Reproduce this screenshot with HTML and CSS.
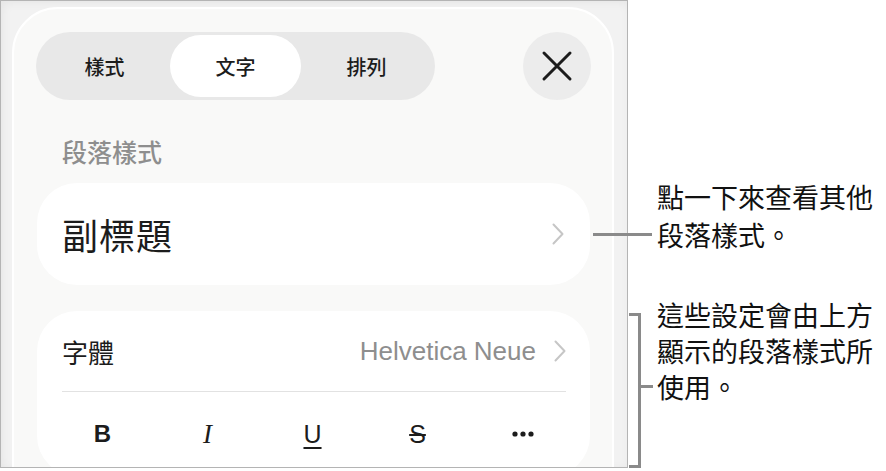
FILE: index.html
```html
<!DOCTYPE html>
<html>
    <head>
        <meta charset="utf-8">
        <title>文字格式</title>
        <link rel="stylesheet" href="styles.css">
    </head>
    <body>
        <div class="page">
            <div class="shot">
                <div class="panel">
                    <div class="toolbar">
                        <div class="tabs">
                            <div class="tab">樣式</div>
                            <div class="tab active">文字</div>
                            <div class="tab">排列</div>
                        </div>
                        <div class="close">
                            <svg width="68" height="68" viewBox="0 0 68 68">
                                <path d="M21 21 L47 47 M47 21 L21 47" stroke="#1c1c1c" stroke-width="3" stroke-linecap="round" fill="none"/>
                            </svg>
                        </div>
                    </div>

                    <div class="section-label">段落樣式</div>

                    <div class="card style-card">
                        <span class="style-name">副標題</span>
                        <svg class="chevron" width="12" height="22" viewBox="0 0 12 22">
                            <path d="M1.5 1.5 L10.5 11 L1.5 20.5" stroke="#c6c6c6" stroke-width="2" fill="none" stroke-linecap="round" stroke-linejoin="round"/>
                        </svg>
                    </div>

                    <div class="card font-card">
                        <div class="font-row">
                            <span class="font-label">字體</span>
                            <span class="font-value">Helvetica Neue</span>
                            <svg class="chevron" width="12" height="22" viewBox="0 0 12 22">
                                <path d="M1.5 1.5 L10.5 11 L1.5 20.5" stroke="#c6c6c6" stroke-width="2" fill="none" stroke-linecap="round" stroke-linejoin="round"/>
                            </svg>
                        </div>
                        <div class="format-row">
                            <span class="fmt fmt-bold">B</span>
                            <span class="fmt fmt-italic">I</span>
                            <span class="fmt fmt-under">U</span>
                            <span class="fmt fmt-strike">S</span>
                            <span class="fmt">
                                <svg width="22" height="6" viewBox="0 0 22 6">
                                    <circle cx="3" cy="3" r="2.6" fill="#1c1c1c"/>
                                    <circle cx="11" cy="3" r="2.6" fill="#1c1c1c"/>
                                    <circle cx="19" cy="3" r="2.6" fill="#1c1c1c"/>
                                </svg>
                            </span>
                        </div>
                    </div>
                </div>
            </div>

            <!-- callouts -->
            <div class="lead lead-style"></div>
            <div class="note note-style">點一下來查看其他<br>段落樣式。</div>

            <div class="bracket"></div>
            <div class="lead lead-bracket"></div>
            <div class="note note-settings">這些設定會由上方<br>顯示的段落樣式所<br>使用。</div>
        </div>
    </body>
</html>
```
FILE: styles.css
```css
body {
    margin: 0;
    background: #fff;
    font-family: "Noto Sans CJK TC", "Liberation Sans", sans-serif;
    color: #1c1c1c;
}

.page {
    position: relative;
    width: 886px;
    height: 471px;
    overflow: hidden;
}

/* device screenshot frame */
.shot {
    width: 626px;
    height: 466px;
    border: 1px solid #b4b4b4;
    background: #f2f2f2;
    box-shadow: inset 2px 2px 10px rgba(0, 0, 0, 0.05);
    overflow: hidden;
}

.panel {
    margin: 6px 0 0 11px;
    width: 602px;
    height: 600px;
    border: 2px solid #fff;
    border-radius: 46px;
    background: #f9f9f8;
    padding: 23px 21px 0 22px;
    box-sizing: border-box;
}

.toolbar {
    display: flex;
    justify-content: space-between;
    align-items: center;
}

.tabs {
    display: grid;
    grid-template-columns: 131px 131px 131px;
    padding: 3px;
    width: 399px;
    height: 68px;
    box-sizing: border-box;
    border-radius: 34px;
    background: #e8e8e8;
}

.tab {
    display: flex;
    align-items: center;
    justify-content: center;
    border-radius: 31px;
    font-size: 20px;
    font-weight: 500;
    color: #1c1c1c;
}

.tab.active {
    background: #fff;
}

.close {
    width: 68px;
    height: 68px;
    border-radius: 50%;
    background: #ececec;
}

.close svg {
    display: block;
}

.section-label {
    margin: 36px 0 0 26px;
    font-size: 25px;
    line-height: 30px;
    font-weight: 500;
    color: #8e8e8e;
}

.card {
    background: #fff;
    border-radius: 40px;
    margin-left: 1px;
    margin-right: 1px;
}

.style-card {
    margin-top: 17px;
    height: 102px;
    display: flex;
    align-items: center;
    justify-content: space-between;
    padding: 0 26px 0 25px;
}

.style-name {
    font-size: 36px;
    font-weight: 400;
    letter-spacing: 1px;
}

.chevron {
    display: block;
    flex: none;
}

.font-card {
    margin-top: 26px;
    padding: 0 24px 0 25px;
}

.font-row {
    display: flex;
    align-items: center;
    height: 80px;
    border-bottom: 1.5px solid #e2e2e2;
}

.font-label {
    font-size: 26px;
    flex: 1;
}

.font-value {
    font-family: "Liberation Sans", sans-serif;
    font-size: 26px;
    color: #8e8e8e;
    margin-right: 18px;
}

.format-row {
    display: grid;
    grid-template-columns: repeat(5, 105px);
    margin: 0 -12px;
    height: 84px;
    align-items: center;
    justify-items: center;
}

.fmt {
    font-family: "Liberation Sans", sans-serif;
    font-size: 25px;
    color: #1c1c1c;
    line-height: 1;
}

.fmt svg {
    display: block;
}

.fmt-bold {
    font-weight: 700;
    font-size: 24px;
}

.fmt-italic {
    font-family: "Liberation Serif", serif;
    font-style: italic;
    font-size: 27px;
}

.fmt-under {
    text-decoration: underline;
    text-decoration-thickness: 2px;
    text-underline-offset: 4px;
}

.fmt-strike {
    text-decoration: line-through;
    text-decoration-thickness: 2px;
}

/* callout text and leader lines */
.note {
    position: absolute;
    left: 657px;
    font-size: 27px;
    color: #111;
    white-space: nowrap;
}

.note-style {
    top: 178px;
    line-height: 38px;
}

.note-settings {
    top: 297px;
    line-height: 36px;
}

.lead {
    position: absolute;
    height: 3px;
    background: #8a8a8a;
}

.lead-style {
    left: 593px;
    top: 233px;
    width: 59px;
}

.lead-bracket {
    left: 641px;
    top: 385px;
    width: 12px;
}

.bracket {
    position: absolute;
    left: 629px;
    top: 313px;
    width: 9px;
    height: 149px;
    border: 3px solid #8a8a8a;
    border-left: none;
}
```
